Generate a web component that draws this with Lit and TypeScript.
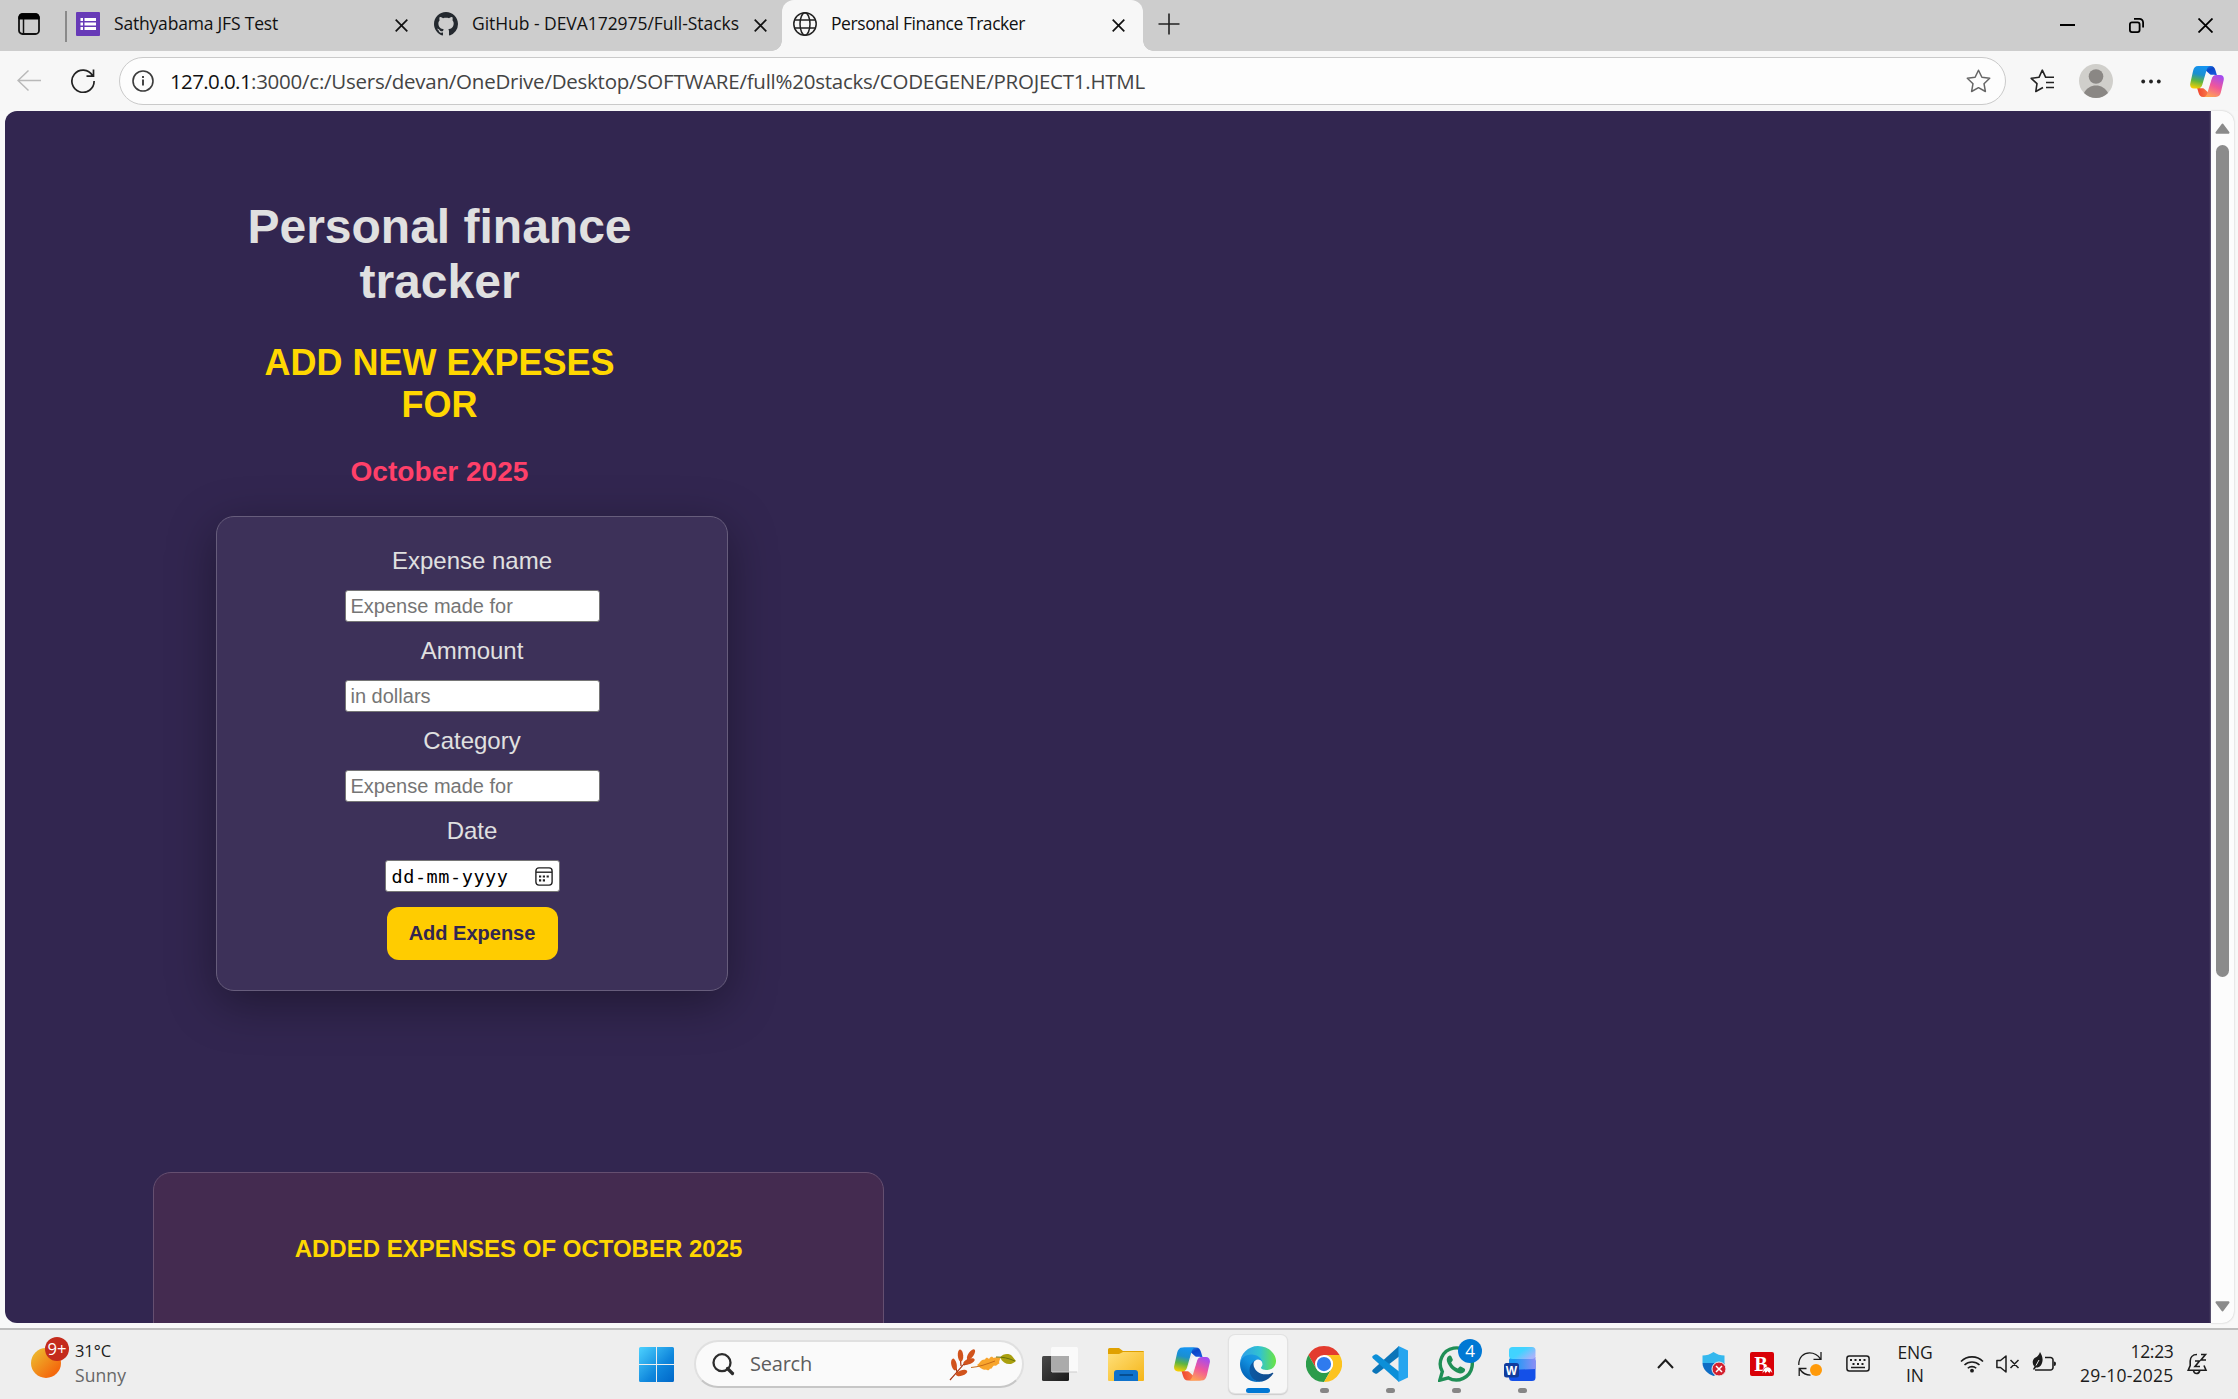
import { LitElement, html, css, svg } from "lit";
import { customElement, property, state } from "lit/decorators.js";
import { styleMap } from "lit/directives/style-map.js";

/** A single line of text tracked so that it fills a given width. */
@customElement("fit-text")
class FitText extends LitElement {
  @property() text = "";
  @property({ type: Number }) w = 100;
  @state() private spacing = 0;

  static styles = css`
    :host { display: block; flex: none; white-space: pre; }
    .line { display: inline-block; }
    .box { white-space: pre; overflow: visible; }
  `;

  firstUpdated() {
    const line = this.renderRoot.querySelector(".line") as HTMLElement;
    const natural = line.getBoundingClientRect().width;
    this.spacing = (this.w - natural) / Math.max(1, this.text.length);
  }

  render() {
    return html`<div class="box" style=${styleMap({ width: `${this.w}px` })}><span class="line" style=${styleMap({ letterSpacing: `${this.spacing}px` })}>${this.text}</span></div>`;
  }
}

const closeIcon = html`<svg width="13" height="13" viewBox="0 0 13 13"><path d="M.7.7 12.3 12.3M12.3.7.7 12.3" stroke="#111" stroke-width="1.7" fill="none"/></svg>`;

const copilot = (id: string, w: number, h: number) => html`
  <svg width=${w} height=${h} viewBox="0 0 36 33">
    <defs>
      <linearGradient id="${id}a" x1="0.4" y1="0" x2="0.2" y2="1"><stop offset="0" stop-color="#1594f0"/><stop offset=".35" stop-color="#1b8fd0"/><stop offset=".65" stop-color="#5fb53f"/><stop offset="1" stop-color="#ffd000"/></linearGradient>
      <linearGradient id="${id}b" x1="0.7" y1="0" x2="0.3" y2="1"><stop offset="0" stop-color="#a44cf0"/><stop offset=".5" stop-color="#f0579a"/><stop offset="1" stop-color="#ffa552"/></linearGradient>
      <linearGradient id="${id}c" x1="0" y1="0" x2="1" y2="1"><stop offset="0" stop-color="#2fb6f8"/><stop offset=".5" stop-color="#0b46c8"/><stop offset="1" stop-color="#1c5be0"/></linearGradient>
      <linearGradient id="${id}d" x1="0" y1="0" x2="1" y2="0"><stop offset="0" stop-color="#f0442e"/><stop offset="1" stop-color="#ff9a5a"/></linearGradient>
    </defs>
    <path d="M9 0H22c3 0 4.200 2 5 4.500L28.500 9.500H22L17 5Z" fill="url(#${id}c)"/>
    <path d="M27 33H14c-3 0-4.200-2-5-4.500L7.500 23.500H14L19 28Z" fill="url(#${id}d)"/>
    <path d="M8.500 0H22c-2.500 0-3.800 2-4.500 4.500L13 20c-.8 2.500-2 4-5 4H4C1 24-.4 21.500.2 18.500L3.200 5C4 2 5.500 0 8.500 0Z" fill="url(#${id}a)"/>
    <path d="M27.500 33H14c2.500 0 3.800-2 4.500-4.500L23 13.500c.8-2.500 2-4 5-4H32c3 0 4.400 2.500 3.800 5.500L32.800 28c-.8 3-2.300 5-5.300 5Z" fill="url(#${id}b)"/>
    <path d="M16.500 13.500C17.400 10.600 18.800 9.300 21.500 9.300H26.500C24.300 9.800 23.300 11.300 22.600 13.500L20.700 19.700C19.800 22.400 18.600 23.700 16 23.700H10C12.300 23.200 13.500 21.800 14.200 19.500Z" fill="#f7f7f7"/>
  </svg>`;

@customElement("browser-tabs")
class BrowserTabs extends LitElement {
  static styles = css`
    :host { display: block; height: 51px; background: #cdcdcd; color: #111; font: 17.500px/24px "Open Sans", "Noto Sans", sans-serif; }
    .strip { display: flex; height: 51px; }
    .panel { display: flex; width: 65px; padding: 13px 0 0 18px; box-sizing: border-box; }
    .tab { display: flex; align-items: flex-start; box-sizing: border-box; height: 51px; }
    .first { width: 358px; border-left: 0; padding-left: 9px; }
    .bar { width: 2px; height: 31px; margin-top: 11px; background: #8a8a8a; flex: none; }
    .second { width: 357px; padding-left: 9px; }
    .active { width: 361px; padding-left: 11px; background: #f7f7f7; border-radius: 12px 12px 0 0; position: relative; }
    .active::before, .active::after { content: ""; position: absolute; bottom: 0; width: 10px; height: 10px; }
    .active::before { left: -10px; background: radial-gradient(circle at 0 0, transparent 9.5px, #f7f7f7 10px); }
    .active::after { right: -10px; background: radial-gradient(circle at 100% 0, transparent 9.5px, #f7f7f7 10px); }
    .icon { width: 24px; height: 24px; margin-top: 12px; flex: none; }
    .title { margin: 11px 0 0 14px; }
    .x { margin: 18.500px 0 0 auto; line-height: 0; }
    .first .x { margin-right: 17px; }
    .second .x { margin-right: 15px; }
    .active .x { margin-right: 18px; }
    .plus { margin: 12.500px 0 0 14.500px; }
    .win { display: flex; margin: 18px 25px 0 auto; gap: 54px; }
  `;
  render() {
    return html`<div class="strip">
      <div class="panel"><svg width="22" height="22" viewBox="0 0 22 22"><rect x="1" y="1" width="20" height="20" rx="3.500" fill="none" stroke="#111" stroke-width="1.800"/><path d="M1 6V4a3 3 0 0 1 3-3H18a3 3 0 0 1 3 3V6Z" fill="#000" stroke="#000"/><path d="M5.500 6V21" stroke="#111" stroke-width="1.500"/></svg></div>
      <div class="bar"></div>
      <div class="tab first">
        <svg class="icon" viewBox="0 0 24 24"><rect width="24" height="24" rx="1" fill="#673ab7"/><path d="M4.500 6h2.500v3H4.500zM8.500 6H20v3H8.500zM4.500 10.500h2.500v3H4.500zM8.500 10.500H20v3H8.500zM4.500 15h2.500v3H4.500zM8.500 15H20v3H8.500z" fill="#fff"/></svg>
        <fit-text class="title" text="Sathyabama JFS Test" w="164"></fit-text>
        <span class="x">${closeIcon}</span>
      </div>
      <div class="tab second">
        <svg class="icon" viewBox="0 0 16 16"><path fill="#24292f" d="M8 0C3.580 0 0 3.580 0 8c0 3.540 2.290 6.530 5.470 7.590.4.070.55-.17.55-.38 0-.19-.01-.82-.01-1.490-2.010.37-2.530-.49-2.690-.94-.09-.23-.48-.94-.82-1.130-.28-.15-.68-.52-.01-.53.63-.01 1.080.58 1.230.82.72 1.210 1.870.87 2.330.66.07-.52.28-.87.51-1.070-1.780-.2-3.640-.89-3.640-3.950 0-.87.31-1.590.82-2.150-.08-.2-.36-1.020.08-2.120 0 0 .67-.21 2.200.82.64-.18 1.320-.27 2-.27s1.360.09 2 .27c1.530-1.040 2.200-.82 2.200-.82.44 1.100.16 1.920.08 2.120.51.56.82 1.270.82 2.150 0 3.070-1.870 3.750-3.650 3.950.29.25.54.73.54 1.480 0 1.070-.01 1.930-.01 2.200 0 .21.15.46.55.38A8.010 8.010 0 0 0 16 8c0-4.420-3.580-8-8-8"/></svg>
        <fit-text class="title" text="GitHub - DEVA172975/Full-Stacks" w="267"></fit-text>
        <span class="x">${closeIcon}</span>
      </div>
      <div class="tab active">
        <svg class="icon" viewBox="0 0 24 24" fill="none" stroke="#222" stroke-width="1.500"><circle cx="12" cy="12" r="11.200"/><ellipse cx="12" cy="12" rx="5" ry="11.200"/><path d="M1.500 8H22.500M1.500 16H22.500"/></svg>
        <fit-text class="title" text="Personal Finance Tracker" w="194"></fit-text>
        <span class="x">${closeIcon}</span>
      </div>
      <svg class="plus" width="22" height="22" viewBox="0 0 22 22"><path d="M11 .5V21.500M.5 11H21.500" stroke="#222" stroke-width="1.600"/></svg>
      <div class="win">
        <svg width="15" height="15" viewBox="0 0 15 15"><path d="M0 7H15" stroke="#000" stroke-width="2"/></svg>
        <svg width="15" height="15" viewBox="0 0 15 15" fill="none" stroke="#000" stroke-width="1.800"><rect x=".9" y="4.400" width="9.700" height="9.700" rx="2"/><path d="M5 .9H10.500A3.600 3.600 0 0 1 14.100 4.500V9.500"/></svg>
        <svg width="15" height="15" viewBox="0 0 15 15"><path d="M.5.5 14.500 14.500M14.500.5.5 14.500" stroke="#000" stroke-width="1.800"/></svg>
      </div>
    </div>`;
  }
}

@customElement("browser-toolbar")
class BrowserToolbar extends LitElement {
  static styles = css`
    :host { display: block; height: 60px; background: #f7f7f7; }
    .bar { display: flex; align-items: center; height: 60px; }
    .back { margin-left: 17px; }
    .reload { margin-left: 30px; }
    .address { display: flex; align-items: center; box-sizing: border-box; width: 1887px; height: 48px; margin-left: 24px; padding: 0 14px 0 12px; border: 1.500px solid #cacaca; border-radius: 24px; background: #fdfdfd; font: 20.500px/28px "Open Sans", "Noto Sans", sans-serif; color: #444; }
    .host { margin-left: 16px; color: #111; }
    .star { margin-left: auto; }
    .fav { margin-left: 23.500px; }
    .avatar { margin-left: 24px; }
    .dots { margin-left: 28px; }
    .copilot { margin-left: 29px; line-height: 0; }
  `;
  render() {
    return html`<div class="bar">
      <svg class="back" width="24" height="24" viewBox="0 0 24 24" fill="none" stroke="#b9b9b9" stroke-width="1.500"><path d="M24 11.500H1M11.500 1.500 1 11.500 11.500 21.500"/></svg>
      <svg class="reload" width="24" height="24" viewBox="0 0 24 24" fill="none" stroke="#222" stroke-width="1.700"><path d="M21.500 6.500A11.100 11.100 0 1 0 23.100 12M22.500.5V7.200H15.500"/></svg>
      <div class="address">
        <svg width="22" height="22" viewBox="0 0 22 22" fill="none" stroke="#3c3c3c" stroke-width="1.600"><circle cx="11" cy="11" r="10"/><path d="M11 9.500V15.500M11 6V8" stroke-width="1.900"/></svg>
        <fit-text class="host" text="127.0.0.1" w="81"></fit-text>
        <fit-text text=":3000/c:/Users/devan/OneDrive/Desktop/SOFTWARE/full%20stacks/CODEGENE/PROJECT1.HTML" w="894"></fit-text>
        <svg class="star" width="25" height="24" viewBox="0 0 25 24" fill="none" stroke="#666" stroke-width="1.500" stroke-linejoin="round"><path d="M12.500 1.200 15.900 8.300 23.700 9.300 18 14.700 19.400 22.500 12.500 18.700 5.600 22.500 7 14.700 1.300 9.300 9.100 8.300Z"/></svg>
      </div>
      <svg class="fav" width="25" height="24" viewBox="0 0 25 24" fill="none" stroke="#222" stroke-width="1.600" stroke-linejoin="round"><path d="M13 18.500 5.800 22.500 7 14.700 1.200 9.300 9 8.300 12.300 1.200 15.700 8.300H24M16 13.500H24M16 18.500H24"/></svg>
      <svg class="avatar" width="34" height="34" viewBox="0 0 34 34"><circle cx="17" cy="17" r="17" fill="#d0cfcb"/><circle cx="17" cy="12.500" r="7.300" fill="#8a8784"/><path d="M5 29C7.500 24 12 21.500 17 21.500S26.500 24 29 29A17 17 0 0 1 5 29Z" fill="#8a8784"/></svg>
      <svg class="dots" width="20" height="6" viewBox="0 0 20 6" fill="#222"><circle cx="2.200" cy="3.500" r="1.900"/><circle cx="10" cy="3.500" r="1.900"/><circle cx="17.800" cy="3.500" r="1.900"/></svg>
      <span class="copilot">${copilot("t", 34, 31)}</span>
    </div>`;
  }
}

@customElement("finance-page")
class FinancePage extends LitElement {
  static styles = css`
    :host { display: block; font-family: "Liberation Sans", Arial, sans-serif; }
    .frame { display: flex; box-sizing: border-box; height: 1217px; padding: 0 4px 5px 5px; background: #f8f8f8; }
    .page { box-sizing: border-box; width: 2206px; height: 1212px; padding-top: 88px; overflow: hidden; border-radius: 12px 0 0 12px; background: #322650; }
    .scroll { display: flex; flex-direction: column; align-items: center; width: 23px; height: 1212px; box-sizing: border-box; padding: 12px 0 11px; background: #fcfcfc; border-radius: 0 12px 12px 0; box-shadow: 0 0 2px #bbb; }
    .thumb { width: 13px; height: 832px; margin-top: 11px; border-radius: 7px; background: #8b8b8b; }
    .down { margin-top: auto; }
    .heads { width: 404px; height: 288px; margin-left: 232.500px; text-align: center; }
    h1, h2, h3 { margin: 0; font-weight: 700; }
    h1 { font-size: 48px; line-height: 55px; color: #e0e0e0; }
    h2 { margin-top: 33px; font-size: 36px; line-height: 42px; color: #ffd700; }
    h3 { margin-top: 30px; font-size: 28.080px; line-height: 32px; color: #ff4069; }
    .card { display: flex; flex-direction: column; align-items: center; gap: 15px; box-sizing: border-box; width: 512px; height: 475px; margin: 29px 0 0 211px; padding: 30px 0; border: 1px solid #675d7c; border-radius: 18px; background: #3d3159; box-shadow: 0 12px 48px rgba(0, 0, 0, .37); }
    .label { height: 28px; font-size: 24px; line-height: 28px; color: #e0e0e0; }
    .input { box-sizing: border-box; height: 32px; border: 1px solid #767676; border-radius: 3px; background: #fff; font-size: 20px; line-height: 30px; }
    .text { width: 255px; padding-left: 5px; color: #757575; }
    .date { display: flex; align-items: center; justify-content: space-between; width: 175px; padding: 2px 6px 0 6px; color: #000; font: 18.500px/28px "DejaVu Sans Mono", monospace; }
    .cal { margin-top: -2px; }
    .btn { width: 171px; height: 53px; border-radius: 12px; background: #fc0; color: #322650; font-size: 20px; font-weight: 700; line-height: 52px; text-align: center; }
    .list { box-sizing: border-box; width: 731px; height: 400px; margin: 181px 0 0 148px; padding-top: 62px; border: 1px solid #654f70; border-radius: 18px; background: #442b50; text-align: center; font-size: 24px; font-weight: 700; line-height: 28px; color: #ffd700; }
  `;

  private fields = [
    ["Expense name", "Expense made for"],
    ["Ammount", "in dollars"],
    ["Category", "Expense made for"],
  ];

  render() {
    return html`<div class="frame">
      <div class="page">
        <div class="heads"><h1>Personal finance tracker</h1><h2>ADD NEW EXPESES FOR</h2><h3>October 2025</h3></div>
        <div class="card">
          ${this.fields.map(([label, hint]) => html`<div class="label">${label}</div><div class="input text">${hint}</div>`)}
          <div class="label">Date</div>
          <div class="input date"><fit-text text="dd-mm-yyyy" w="117"></fit-text>
            <svg class="cal" width="18" height="19" viewBox="0 0 18 19" fill="none" stroke="#222" stroke-width="1.400"><rect x=".9" y=".9" width="16.200" height="17.200" rx="3"/><path d="M1 5.200H17"/><path d="M4 9.500H14M4 13.300H10.500" stroke-width="2.200" stroke-dasharray="2.200 1.600"/></svg>
          </div>
          <div class="btn">Add Expense</div>
        </div>
        <div class="list">ADDED EXPENSES OF OCTOBER 2025</div>
      </div>
      <div class="scroll">
        <svg width="15" height="11" viewBox="0 0 15 11"><path d="M7.500 1.500 13.500 9.700H1.500Z" fill="#8b8b8b" stroke="#8b8b8b" stroke-width="2" stroke-linejoin="round"/></svg>
        <div class="thumb"></div>
        <svg class="down" width="15" height="11" viewBox="0 0 15 11"><path d="M7.500 9.500 13.500 1.300H1.500Z" fill="#8b8b8b" stroke="#8b8b8b" stroke-width="2" stroke-linejoin="round"/></svg>
      </div>
    </div>`;
  }
}

const leaflet = (x: number, y: number, r: number) =>
  svg`<ellipse cx=${x} cy=${y} rx="6" ry="2.700" transform="rotate(${r} ${x} ${y})" fill="#d1531c"/>`;

@customElement("task-bar")
class TaskBar extends LitElement {
  static styles = css`
    :host { display: block; height: 71px; box-sizing: border-box; border-top: 2px solid #bebebe; background: #eee; font: 17.500px/24px "Open Sans", "Noto Sans", sans-serif; color: #1c1c1c; }
    .bar { display: flex; height: 69px; }
    .weather { display: flex; width: 638px; padding-left: 31px; box-sizing: border-box; }
    .sun { margin-top: 7px; }
    .wtext { margin: 9px 0 0 5px; }
    .wtext .temp { font-size: 16.500px; }
    .wtext .sub { color: #666; }
    .start { margin: 17px 0 0 1px; }
    .search { display: flex; box-sizing: border-box; width: 330px; height: 48px; margin: 10px 0 0 20px; padding: 11px 5px 0 16px; border: 2px solid #e0e0e0; border-bottom-color: #c6c6c6; border-radius: 24px; background: #fafafa; font-size: 20px; line-height: 24px; color: #5d5d5d; }
    .search .q { margin: -1px 0 0 15px; }
    .search .leaf { margin: -4px 0 0 auto; }
    .apps { display: flex; gap: 8px; margin: 5px 0 0 7px; }
    .app { display: flex; flex-direction: column; align-items: center; width: 58px; height: 58px; padding-top: 11px; box-sizing: border-box; border-radius: 6px; }
    .app svg { flex: none; }
    .app.on { background: #f7f7f7; box-shadow: 0 0 0 1px #e2e2e2, 0 1px 1px 1px #ccc; }
    .dot { width: 9px; height: 5px; margin-top: 6px; border-radius: 3px; background: #868686; }
    .on .dot { width: 24px; background: #0078d4; }
    .wa { position: relative; }
    .badge { position: absolute; left: 31px; top: 4px; width: 24px; height: 24px; border-radius: 12px; background: #0078d4; color: #fff; font-size: 17px; line-height: 24px; text-align: center; }
    .tray { display: flex; margin-left: auto; padding-right: 30px; }
    .tray svg { flex: none; }
    .t { margin-top: 22px; margin-right: 24px; }
    .chev { margin-right: 28px; }
    .lang { display: flex; flex-direction: column; align-items: center; width: 36px; margin: 11px 27px 0 3px; line-height: 23px; }
    .s { margin-top: 22px; margin-right: 12px; }
    .clock { display: flex; flex-direction: column; align-items: flex-end; margin: 9px 13.500px 0 12px; }
    .bell { margin-top: 22px; }
  `;

  render() {
    return html`<div class="bar">
      <div class="weather">
        <svg class="sun" width="39" height="42" viewBox="0 0 39 42"><defs><linearGradient id="sun" x1="0" y1="0" x2="1" y2="1"><stop offset=".1" stop-color="#edb92e"/><stop offset=".8" stop-color="#f4690d"/></linearGradient></defs><circle cx="15" cy="26" r="15" fill="url(#sun)"/><circle cx="26" cy="12" r="12" fill="#c42b1c"/><text x="26" y="18" text-anchor="middle" font-size="16" textLength="19" lengthAdjust="spacingAndGlyphs" fill="#fff">9+</text></svg>
        <div class="wtext"><fit-text class="temp" text="31°C" w="36"></fit-text><fit-text class="sub" text="Sunny" w="51"></fit-text></div>
      </div>
      <svg class="start" width="35" height="35" viewBox="0 0 35 35"><defs><linearGradient id="st" gradientUnits="userSpaceOnUse" x1="0" y1="0" x2="35" y2="35"><stop offset="0" stop-color="#4cd2ff"/><stop offset=".6" stop-color="#0f86dc"/><stop offset="1" stop-color="#0067c8"/></linearGradient></defs><path d="M1.500 0H17V17H0V1.500A1.500 1.500 0 0 1 1.500 0ZM18 0H33.500A1.500 1.500 0 0 1 35 1.500V17H18ZM0 18H17V35H1.500A1.500 1.500 0 0 1 0 33.500ZM18 18H35V33.500A1.500 1.500 0 0 1 33.500 35H18Z" fill="url(#st)"/></svg>
      <div class="search">
        <svg width="23" height="23" viewBox="0 0 23 23" fill="none" stroke="#2c2c2c"><circle cx="10" cy="9.700" r="8.500" stroke-width="2.300"/><path d="M15.500 15.500 20.500 20.500" stroke-width="3.200" stroke-linecap="round"/></svg>
        <fit-text class="q" text="Search" w="62"></fit-text>
        <svg class="leaf" width="68" height="32" viewBox="0 0 68 32">
          <path d="M1 31C7 24 12 19 24 4M8 23 5 12M12 17 11 5M8 24 17 23M15 16 23 13" fill="none" stroke="#a8330f" stroke-width="1.200"/>
          ${leaflet(5, 15.5, 78)}${leaflet(11.5, 6.5, 85)}${leaflet(22, 5.5, 125)}${leaflet(20, 12.5, 160)}${leaflet(12.5, 24, 162)}
          <path d="M28 16C31 14 32 10 36 10.500 37 7.500 39 9 40 10 42 6.500 44 8 44.500 9 47 7.500 49 8.500 51 8.500 51.500 11 49.500 12 50.500 14.500 48 15 48 17.500 45 16.500 43 18 43 20.500 41 19.500 40 22 38 21.500 37 20.500 34 21.500 33 19.500 31.500 19 29.500 19 28.500 17.500Z" fill="#f8a52c"/><path d="M22 18.500C30 18 38 15 46 12" fill="none" stroke="#c86c18" stroke-width="1"/>
          <path d="M51 8.500C54 4.500 60 4 63 7L67 12C62 17 55 16 51 8.500Z" fill="#aaa00f"/><path d="M47 8C54 8 59 9 66 12" fill="none" stroke="#68700a" stroke-width="1"/>
        </svg>
      </div>
      <div class="apps">
        <div class="app"><svg width="36" height="36" viewBox="0 0 36 36"><defs><linearGradient id="tv" x1="0" y1="0" x2="1" y2="1"><stop offset="0" stop-color="#4a4a4a"/><stop offset="1" stop-color="#1a1a1a"/></linearGradient></defs><rect y="10" width="27" height="25" rx="1.500" fill="url(#tv)"/><rect x="9" y="1" width="27" height="25" rx="1.500" fill="#fafafa"/><path d="M9 10H27V26H10.500A1.500 1.500 0 0 1 9 24.500Z" fill="#ababab"/><path d="M10 26H35" stroke="#ccc"/></svg></div>
        <div class="app"><svg width="36" height="36" viewBox="0 0 36 36"><defs><linearGradient id="fo" x1="0" y1="0" x2="1" y2="1"><stop offset="0" stop-color="#ffe07a"/><stop offset="1" stop-color="#f5b518"/></linearGradient></defs><path d="M0 3.500A1.500 1.500 0 0 1 1.500 2H11L15 5H35A1 1 0 0 1 36 6V20H0Z" fill="#e0a100"/><path d="M0 8H11L15 6H36V34A1 1 0 0 1 35 35H1A1 1 0 0 1 0 34Z" fill="url(#fo)"/><path d="M6 35V27A3 3 0 0 1 9 24H27A3 3 0 0 1 30 27V35Z" fill="#0f72cc"/><path d="M11.500 29H25" stroke="#064a8c" stroke-width="1.800"/></svg></div>
        <div class="app">${copilot("k", 36, 36)}</div>
        <div class="app on"><svg width="36" height="36" viewBox="0 0 256 256">
          <defs>
            <linearGradient id="e1" x1="63" y1="178" x2="241" y2="178" gradientUnits="userSpaceOnUse"><stop offset="0" stop-color="#0c59a4"/><stop offset="1" stop-color="#114a8b"/></linearGradient>
            <linearGradient id="e2" x1="153" y1="100" x2="46" y2="230" gradientUnits="userSpaceOnUse"><stop offset="0" stop-color="#1b9de2"/><stop offset=".4" stop-color="#1290df"/><stop offset="1" stop-color="#0364b8"/></linearGradient>
            <linearGradient id="e3" x1="10" y1="90" x2="250" y2="90" gradientUnits="userSpaceOnUse"><stop offset="0" stop-color="#2e9fe8"/><stop offset=".55" stop-color="#32c3d0"/><stop offset="1" stop-color="#68e34a"/></linearGradient>
          </defs>
          <path d="M231 190.500c-3.400 1.800-6.900 3.400-10.500 4.700-11.500 4.300-23.600 6.500-35.900 6.500-47.300 0-88.500-32.500-88.500-74.300.1-11.400 6.400-21.900 16.400-27.300-42.800 1.800-53.800 46.400-53.800 72.500 0 73.900 68.100 81.400 82.800 81.400 7.900 0 19.800-2.300 27-4.600l1.300-.4c27.600-9.500 51-28.100 66.600-52.800 2.400-3.900-2.100-7.800-5.400-5.700z" fill="url(#e1)"/>
          <path d="M105.700 241.400c-8.900-5.500-16.600-12.800-22.700-21.300-26.300-36-18.400-86.500 17.600-112.800 3.800-2.700 7.700-5.200 11.900-7.200 3.100-1.500 8.400-4.100 15.500-4 10.100.1 19.600 4.900 25.700 13 4 5.400 6.300 11.900 6.400 18.700 0-.2 24.500-79.600-80-79.600-43.900 0-80 41.700-80 78.200-.2 19.300 4 38.500 12.100 56 27.600 58.800 94.800 87.600 156.400 67.100-21.100 6.600-44.100 3.700-62.900-8.100z" fill="url(#e2)"/>
          <path d="M152.300 148.900c-.8 1-3.300 2.500-3.300 5.700 0 2.600 1.700 5.200 4.800 7.300 14.400 10 41.500 8.700 41.600 8.700 10.700 0 21.100-2.900 30.300-8.300 18.800-11 30.400-31.200 30.400-52.900.3-22.400-8-37.300-11.300-43.900C223.500 23.900 177.700 0 128 0 58 0 1 56.200 0 126.200.5 89.700 36.800 60.200 80 60.200c3.500 0 23.500.3 42 10 16.300 8.600 24.900 18.900 30.800 29.200 6.200 10.700 7.300 24.100 7.300 29.500s-2.700 13.300-7.800 20z" fill="url(#e3)"/>
        </svg><div class="dot"></div></div>
        <div class="app"><svg width="36" height="36" viewBox="0 0 48 48"><path d="M24 0A24 24 0 0 0 3.200 12L13.600 30 24 12H44.800A24 24 0 0 0 24 0Z" fill="#e33b2e"/><path d="M3.200 12A24 24 0 0 0 24 48L34.400 30A12 12 0 0 1 13.600 30Z" fill="#2c9c4b"/><path d="M44.800 12A24 24 0 0 1 24 48L34.400 30A12 12 0 0 0 24 12Z" fill="#fcc31e"/><circle cx="24" cy="24" r="12" fill="#fff"/><circle cx="24" cy="24" r="9.500" fill="#2f7bee"/></svg><div class="dot"></div></div>
        <div class="app"><svg width="36" height="36" viewBox="0 0 36 36"><path d="M27 0 1 23.500Q-.5 25 1 26.200L3 27.500Q4.200 28.200 5.500 27.200L27 10.500Z" fill="#0b74b8"/><path d="M27 36 1 12.500Q-.5 11 1 9.800L3 8.500Q4.200 7.800 5.500 8.800L27 25.500Z" fill="#0c8fd8"/><path d="M26.500 0 36 4.500V31.500L26.500 36Z" fill="#26a5ef"/></svg><div class="dot"></div></div>
        <div class="app wa"><svg width="36" height="36" viewBox="0 0 36 36"><path d="M1.800 34.200 4.300 25.700A16 16 0 1 1 10.500 31.900Z" fill="none" stroke="#1f8f56" stroke-width="3.400"/><path d="M11.500 9.500C9 10.500 8.300 13 9 15.500 11 21.500 15.500 25.500 21 27.200 24 28 26.500 26.500 27 24.500 27.300 23 27 22.800 26 22.200L22.800 20.600C22 20.200 21.600 20.400 21 21.200L19.800 22.600C16.800 21.500 14.500 19.300 13.200 16.500L14.500 14.700C14.900 14.200 14.900 13.800 14.700 13.200L13.300 10.200C12.900 9.400 12.300 9.300 11.500 9.500Z" fill="#1f8f56"/></svg><div class="dot"></div><span class="badge">4</span></div>
        <div class="app"><svg width="36" height="36" viewBox="0 0 36 36"><defs><linearGradient id="w1" x1="0" y1="0" x2="1" y2=".6"><stop offset=".5" stop-color="#41d3ff"/><stop offset="1" stop-color="#a3b4fb"/></linearGradient><linearGradient id="w2" x1="0" y1="0" x2="1" y2="0"><stop offset=".2" stop-color="#1a9af5"/><stop offset="1" stop-color="#8b8df5"/></linearGradient></defs><rect x="5" y="12" width="26.500" height="23" rx="3.500" fill="#1450e8"/><path d="M5 24V15Q5 11 9 11H31.500V23Z" fill="url(#w2)"/><rect x="5" y="1" width="26.500" height="12" rx="3.500" fill="url(#w1)"/><rect x="0" y="17" width="15" height="14.500" rx="2.500" fill="#103b9c"/><text x="7.500" y="28.500" font-family="Liberation Sans" font-weight="700" font-size="12" text-anchor="middle" fill="#fff">W</text></svg><div class="dot"></div></div>
      </div>
      <div class="tray">
        <svg class="t chev" width="17" height="24" viewBox="0 0 17 24"><path d="M1 16 8.500 8 16 16" fill="none" stroke="#1c1c1c" stroke-width="2"/></svg>
        <svg class="t" width="24" height="24" viewBox="0 0 24 24"><path d="M11.500 0Q16.500 3.500 22.500 3.500V11H.5V3.500Q6.500 3.500 11.500 0Z" fill="#34b8ee"/><path d="M.5 11H22.500C22.500 17 17.500 22 11.500 24 5.500 22 .5 17 .5 11Z" fill="#0e6cc4"/><circle cx="17" cy="17" r="7" fill="#d3202e" stroke="#eee"/><path d="M14 14 20 20M20 14 14 20" stroke="#fff" stroke-width="1.500"/></svg>
        <svg class="t" width="24" height="24" viewBox="0 0 24 24"><rect width="24" height="24" rx="2" fill="#d90007"/><text x="11" y="19" font-family="Liberation Serif" font-weight="700" font-size="20" text-anchor="middle" fill="#fff">B</text><path d="M12 21.500C13 17 15 15 17.500 15S22 17 22.500 21.500L20.500 19.500 19.500 21.500 17.500 19.500 15.500 21.500 14.500 19.500Z" fill="#fff" stroke="#d90007" stroke-width=".6"/></svg>
        <svg class="t" width="24" height="24" viewBox="0 0 24 24" fill="none" stroke="#1c1c1c" stroke-width="1.300"><path d="M.8 13C.5 5 6 .8 11.500.8 16 .8 20 3 22.500 7M23 0V7.300H15.500M8.500 16.500H1.200V24M2 17.500C4.500 21 8 23.200 12.500 23.200"/><circle cx="18" cy="18" r="6" fill="#ff9a0a" stroke="none"/></svg>
        <svg class="t" width="24" height="24" viewBox="0 0 24 24" fill="none" stroke="#1c1c1c"><rect x=".9" y="3.900" width="22.200" height="15.200" rx="2.500" stroke-width="1.500"/><path d="M4 8H20M6.500 12H18.500" stroke-width="2" stroke-dasharray="2 2.500"/><path d="M5 15.500H19" stroke-width="1.500"/></svg>
        <div class="lang"><fit-text text="ENG" w="35"></fit-text><fit-text text="IN" w="18"></fit-text></div>
        <svg class="s" width="24" height="24" viewBox="0 0 24 24" fill="none" stroke="#1c1c1c" stroke-width="1.600"><path d="M1 9.500A15.500 15.500 0 0 1 23 9.500M4.500 13A10.700 10.700 0 0 1 19.500 13M7.800 16.300A6 6 0 0 1 16.200 16.300"/><circle cx="12" cy="18.700" r="1.900" fill="#1c1c1c" stroke="none"/></svg>
        <svg class="s" width="24" height="24" viewBox="0 0 24 24" fill="none" stroke="#1c1c1c" stroke-width="1.500" stroke-linejoin="round"><path d="M.9 8.500H4.500L10 4V20L4.500 15.500H.9ZM14.500 8 22.500 16M22.500 8 14.500 16"/></svg>
        <svg class="s" width="24" height="24" viewBox="0 0 24 24" fill="none" stroke="#1c1c1c" stroke-width="1.600"><path d="M13 5.500H18.500A2.500 2.500 0 0 1 21 8V15.500A2.500 2.500 0 0 1 18.500 18H3"/><path d="M22 9.500Q24 9.500 24 11.700T22 14Z" fill="#1c1c1c" stroke="none"/><path d="M8 0C9.500 3 11 5 10.500 9 10 13 7.500 16 4 15.500L2 18 1 17 2.500 14.500C-.5 11.500.5 7 3.500 5.500 5.500 4.500 7 3 8 0Z" fill="#1c1c1c" stroke="none"/><path d="M7 8 4 13.500" stroke="#eee" stroke-width="1"/></svg>
        <div class="clock"><fit-text text="12:23" w="43"></fit-text><fit-text text="29-10-2025" w="93.500"></fit-text></div>
        <svg class="bell" width="21" height="24" viewBox="0 0 21 24" fill="none" stroke="#1c1c1c" stroke-width="1.600"><path d="M10 2.500C5.500 2.500 3.200 5.500 3.200 9V13.500L1.200 18.200H19L17 13.500M6.500 18.500C7 22.500 12 22.500 12.800 18.500M14 2.500H18.500L14 8H19M8 9H12.500L8 14.500H13"/></svg>
      </div>
    </div>`;
  }
}

@customElement("app-root")
class AppRoot extends LitElement {
  static styles = css`
    :host { display: block; width: 2238px; height: 1399px; overflow: hidden; background: #f7f7f7; }
  `;
  render() {
    return html`<browser-tabs></browser-tabs><browser-toolbar></browser-toolbar><finance-page></finance-page><task-bar></task-bar>`;
  }
}
